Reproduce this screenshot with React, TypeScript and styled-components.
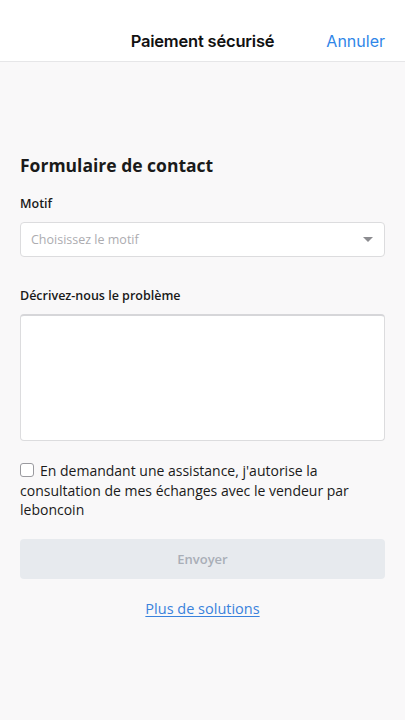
import React from "react";
import styled, { createGlobalStyle } from "styled-components";

const GlobalStyle = createGlobalStyle`
  html, body {
    margin: 0;
    padding: 0;
    background: #f9f8f9;
  }
  #root {
    min-height: 720px;
  }
`;

const Screen = styled.div`
  width: 405px;
  height: 720px;
  display: flex;
  flex-direction: column;
  background: #f9f8f9;
  font-family: "Open Sans", "Noto Sans", sans-serif;
  color: #1a1a1a;
`;

const NavBar = styled.header`
  height: 62px;
  flex-shrink: 0;
  background: #ffffff;
  border-bottom: 1px solid #e6e6e8;
  display: grid;
  grid-template-columns: 1fr auto 1fr;
  align-items: end;
  padding: 0 20px 10px;
  box-sizing: border-box;
  font-family: Inter, "Liberation Sans", sans-serif;
`;

const NavTitle = styled.h1`
  grid-column: 2;
  margin: 0;
  font-size: 16.5px;
  font-weight: 600;
  letter-spacing: -0.2px;
  color: #111;
`;

const NavAction = styled.button`
  grid-column: 3;
  justify-self: end;
  border: none;
  background: none;
  padding: 0;
  font-family: inherit;
  font-size: 16px;
  font-weight: 400;
  color: #2f86e8;
`;

const Content = styled.main`
  display: flex;
  flex-direction: column;
  padding: 91px 20px 0;
`;

const Heading = styled.h2`
  margin: 0 0 18px;
  font-size: 17.5px;
  font-weight: 700;
  line-height: 24px;
  color: #1a1a1a;
`;

const Label = styled.label`
  display: block;
  font-size: 12.5px;
  font-weight: 600;
  line-height: 18px;
  color: #1a1a1a;
  margin-bottom: 9px;
`;

const Field = styled.div`
  margin-bottom: 30px;
`;

const SelectBox = styled.div`
  height: 35px;
  box-sizing: border-box;
  background: #fff;
  border: 1px solid #dcdcde;
  border-radius: 4px;
  display: flex;
  align-items: center;
  justify-content: space-between;
  padding: 0 11px 0 10px;
`;

const Placeholder = styled.span`
  font-size: 12.5px;
  color: #acacb0;
`;

const Caret = styled.span`
  width: 0;
  height: 0;
  border-left: 5px solid transparent;
  border-right: 5px solid transparent;
  border-top: 5px solid #8c8c90;
`;

const TextArea = styled.div`
  height: 127px;
  box-sizing: border-box;
  background: #fff;
  border: 1px solid #dcdcde;
  border-top: 2px solid #d6d6d9;
  border-radius: 4px;
`;

const Consent = styled.p`
  margin: -10px 0 0;
  font-size: 14px;
  line-height: 19.5px;
  color: #1a1a1a;
`;

const Checkbox = styled.span`
  display: inline-block;
  width: 12px;
  height: 12px;
  border: 1.5px solid #9a9a9f;
  border-radius: 3px;
  vertical-align: -1px;
  margin-right: 6px;
  background: #fff;
`;

const SubmitButton = styled.button<{ disabled?: boolean }>`
  margin-top: 19px;
  height: 40px;
  border: none;
  border-radius: 4px;
  background: ${(p) => (p.disabled ? "#e7eaee" : "#ec5a13")};
  color: ${(p) => (p.disabled ? "#a9aeb7" : "#fff")};
  font-family: inherit;
  font-size: 13px;
  font-weight: 600;
`;

const MoreLink = styled.a`
  align-self: center;
  margin-top: 20px;
  font-size: 14.5px;
  color: #3a82dc;
  text-decoration: underline;
  text-underline-offset: 2px;
`;

export default function App() {
  return (
    <Screen>
      <GlobalStyle />
      <NavBar>
        <NavTitle>Paiement sécurisé</NavTitle>
        <NavAction>Annuler</NavAction>
      </NavBar>
      <Content>
        <Heading>Formulaire de contact</Heading>
        <Field>
          <Label>Motif</Label>
          <SelectBox>
            <Placeholder>Choisissez le motif</Placeholder>
            <Caret />
          </SelectBox>
        </Field>
        <Field>
          <Label>Décrivez-nous le problème</Label>
          <TextArea />
        </Field>
        <Consent>
          <Checkbox />
          En demandant une assistance, j'autorise la consultation de mes échanges avec le vendeur par leboncoin
        </Consent>
        <SubmitButton disabled>Envoyer</SubmitButton>
        <MoreLink href="#">Plus de solutions</MoreLink>
      </Content>
    </Screen>
  );
}
